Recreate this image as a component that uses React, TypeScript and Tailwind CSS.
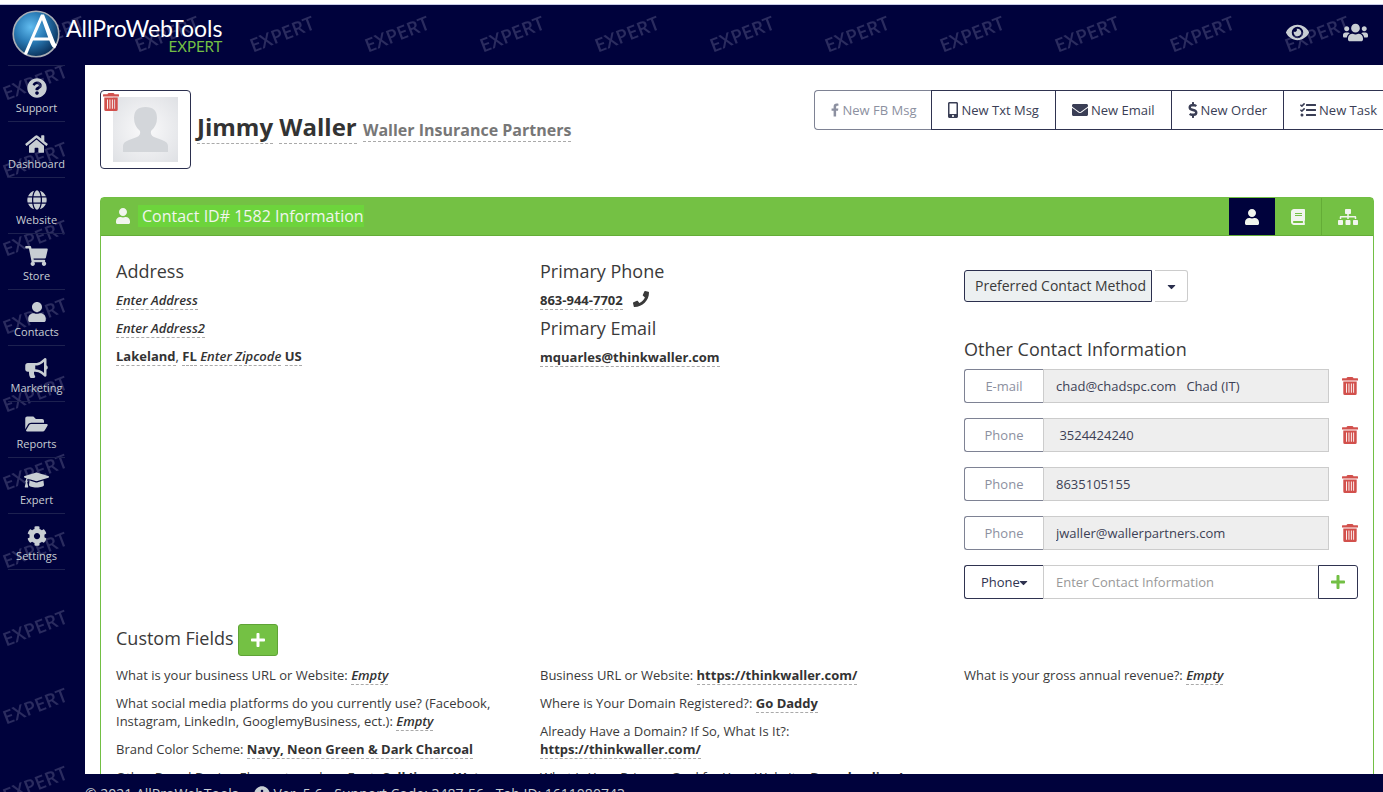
import { useState } from 'react'
import type { ReactNode } from 'react'
import type { IconType } from 'react-icons'
import {
  FaBook,
  FaBullhorn,
  FaCaretDown,
  FaCog,
  FaDollarSign,
  FaEnvelope,
  FaEye,
  FaFacebookF,
  FaFolderOpen,
  FaGlobe,
  FaGraduationCap,
  FaHome,
  FaInfoCircle,
  FaMobileAlt,
  FaPhone,
  FaPlus,
  FaQuestionCircle,
  FaShoppingCart,
  FaSitemap,
  FaTasks,
  FaUser,
  FaUsers,
} from 'react-icons/fa'

const NAV_ITEMS: { label: string; icon: IconType; iconClass: string }[] = [
  { label: 'Support', icon: FaQuestionCircle, iconClass: 'w-5' },
  { label: 'Dashboard', icon: FaHome, iconClass: 'w-[23px]' },
  { label: 'Website', icon: FaGlobe, iconClass: 'w-5' },
  { label: 'Store', icon: FaShoppingCart, iconClass: 'w-[23px]' },
  { label: 'Contacts', icon: FaUser, iconClass: 'w-5' },
  { label: 'Marketing', icon: FaBullhorn, iconClass: 'w-[23px]' },
  { label: 'Reports', icon: FaFolderOpen, iconClass: 'w-[23px]' },
  { label: 'Expert', icon: FaGraduationCap, iconClass: 'w-[25px]' },
  { label: 'Settings', icon: FaCog, iconClass: 'w-5' },
]

const ACTIONS: { label: string; icon: IconType; iconClass: string; disabled?: boolean }[] = [
  { label: 'New FB Msg', icon: FaFacebookF, iconClass: 'w-2', disabled: true },
  { label: 'New Txt Msg', icon: FaMobileAlt, iconClass: 'w-2.5' },
  { label: 'New Email', icon: FaEnvelope, iconClass: 'w-4' },
  { label: 'New Order', icon: FaDollarSign, iconClass: 'w-2.5' },
  { label: 'New Task', icon: FaTasks, iconClass: 'w-4' },
]

const TABS: { label: string; icon: IconType; className: string }[] = [
  { label: 'Contact', icon: FaUser, className: 'w-[46px]' },
  { label: 'Notes', icon: FaBook, className: 'w-[46px]' },
  { label: 'Hierarchy', icon: FaSitemap, className: 'w-[52px] border-l border-[#64ac37]' },
]

const OTHER_CONTACTS = [
  { type: 'E-mail', value: 'chad@chadspc.com\u00a0\u00a0 Chad (IT)' },
  { type: 'Phone', value: '\u00a03524424240' },
  { type: 'Phone', value: '8635105155' },
  { type: 'Phone', value: 'jwaller@wallerpartners.com' },
]

const CUSTOM_FIELDS: { question: string; answer?: string }[][] = [
  [
    { question: 'What is your business URL or Website:' },
    {
      question:
        'What social media platforms do you currently use? (Facebook, Instagram, LinkedIn, GooglemyBusiness, ect.):',
    },
    { question: 'Brand Color Scheme:', answer: 'Navy, Neon Green & Dark Charcoal' },
    { question: 'Other Brand Design Elements such as Font:', answer: 'Call Jimmy Wat' },
  ],
  [
    { question: 'Business URL or Website:', answer: 'https://thinkwaller.com/' },
    { question: 'Where is Your Domain Registered?:', answer: 'Go Daddy' },
    { question: 'Already Have a Domain? If So, What Is It?:', answer: 'https://thinkwaller.com/' },
    { question: 'What Is Your Primary Goal for Your Website:', answer: 'Downloading I' },
  ],
  [{ question: 'What is your gross annual revenue?:' }],
]

// Repeating plan name behind the navy chrome
function Watermark({ id, x, y }: { id: string; x: number; y: number }) {
  return (
    <svg className="pointer-events-none absolute inset-0 h-full w-full" aria-hidden="true">
      <defs>
        <pattern id={id} x={x} y={y} width="115" height="78" patternUnits="userSpaceOnUse">
          <text
            x="57"
            y="46"
            textAnchor="middle"
            fontSize="19"
            fontFamily="'Open Sans', sans-serif"
            fontWeight="600"
            fill="#2b2c5f"
            transform="rotate(-21 57 39)"
          >
            EXPERT
          </text>
        </pattern>
      </defs>
      <rect width="100%" height="100%" fill={`url(#${id})`} />
    </svg>
  )
}

function TrashIcon() {
  return (
    <svg width="16" height="18" viewBox="0 0 16 18" fill="#d2504c" aria-hidden="true">
      <path
        fillRule="evenodd"
        d="M4.500 1.200Q4.800 0 6 0H10Q11.200 0 11.500 1.200H15.500Q16 1.200 16 1.800V3.500H0V1.800Q0 1.200 .5 1.200ZM1.300 4.500H14.700V16.500Q14.700 18 13.200 18H2.800Q1.300 18 1.300 16.500ZM4.100 6.600V15.800H5V6.600ZM6.500 6.600V15.800H7.400V6.600ZM8.900 6.600V15.800H9.800V6.600ZM11.200 6.600V15.800H12.100V6.600Z"
      />
    </svg>
  )
}

function Logo() {
  return (
    <a href="#" className="relative flex items-start gap-1.5 pt-[5px] pl-3">
      <svg width="48" height="48" viewBox="0 0 48 48" aria-hidden="true">
        <defs>
          <radialGradient id="orb" cx="0.38" cy="0.35" r="0.65">
            <stop offset="0" stopColor="#62bdf0" />
            <stop offset="0.5" stopColor="#2b7db8" />
            <stop offset="1" stopColor="#0c3560" />
          </radialGradient>
        </defs>
        <circle cx="24" cy="24" r="22.800" fill="url(#orb)" stroke="#a9adb5" strokeWidth="1.600" />
        <path
          d="M12 43.500 29 4.500H32L43 32.500Q43.500 34 45 34.500L43 38.500Q40 37.500 39 34.500L37.300 30.500H21L15 44.500Q13.500 45.500 12 43.500ZM22.300 27.500H36.200L30 10Z"
          fill="#fff"
        />
      </svg>
      <span className="flex flex-col items-end pt-1">
        <span className="font-['Lato'] text-[23px] leading-[28px] text-white">AllProWebTools</span>
        <span className="-mt-1.5 font-['Lato'] text-[15px] leading-5 text-[#72bf44]">EXPERT</span>
      </span>
    </a>
  )
}

function Editable({ children, empty }: { children: ReactNode; empty?: boolean }) {
  return (
    <a
      href="#"
      className={
        empty
          ? 'border-b border-dashed border-[#aaa] font-semibold text-[#333] italic'
          : 'border-b border-dashed border-[#aaa] font-bold text-[#333]'
      }
    >
      {children}
    </a>
  )
}

function Heading({ children }: { children: ReactNode }) {
  return <h3 className="text-lg leading-5 text-[#3a3a3a]">{children}</h3>
}

function ContactRow({ id, type, value }: { id: string; type: string; value: string }) {
  return (
    <div className="flex items-center">
      <label
        htmlFor={id}
        className="h-[34px] w-[79px] shrink-0 rounded-l-[3px] border border-r-0 border-[#7e8294] text-center leading-8 text-[#8c90a0]"
      >
        {type}
      </label>
      <input
        id={id}
        readOnly
        defaultValue={value}
        className="h-[34px] w-full min-w-0 border border-[#ccc] bg-[#eee] px-3 text-[#3c3f55] outline-none"
      />
      <button type="button" aria-label={`Delete ${type}`} className="ml-[13px] shrink-0">
        <TrashIcon />
      </button>
    </div>
  )
}

export default function App() {
  const [tab, setTab] = useState('Contact')

  return (
    <div className="flex h-screen flex-col overflow-hidden bg-white pt-1 font-['Open_Sans',sans-serif] text-[13px] leading-[18px] text-[#3a3a3a]">
      <header className="relative flex h-[61px] shrink-0 items-start justify-between border-t border-[#c8cbe6] bg-[#00023c]">
        <Watermark id="wm-top" x={-5} y={-10} />
        <Logo />
        <div className="relative flex items-center gap-[34px] pt-[15px] pr-[15px] text-[#c8ced3]">
          <button type="button" aria-label="Preview">
            <FaEye size={23} />
          </button>
          <button type="button" aria-label="Users">
            <FaUsers size={25} />
          </button>
        </div>
      </header>

      <div className="flex min-h-0 flex-1">
        <nav className="relative w-[85px] shrink-0 overflow-hidden bg-[#00023c] pl-2">
          <Watermark id="wm-side" x={-22} y={-22} />
          <ul className="relative w-[57px] border-t border-[#1d2150]">
            {NAV_ITEMS.map(({ label, icon: Icon, iconClass }) => (
              <li key={label} className="border-b border-[#1d2150]">
                <a href="#" className="flex h-[55px] flex-col items-center pt-3 text-[#c8ced3]">
                  <Icon className={`h-5 ${iconClass}`} />
                  <span className="mt-0.5 text-[11px] leading-4">{label}</span>
                </a>
              </li>
            ))}
          </ul>
        </nav>

        <div className="flex min-w-0 flex-1 flex-col">
          <main className="min-h-0 flex-1 overflow-hidden pt-[25px] pr-[9px] pl-[15px]">
            <div className="flex items-start justify-between">
              <div className="flex items-center gap-1.5">
                <div className="relative h-[79px] w-[91px] shrink-0 rounded border border-[#2b2f4e] px-3 py-1.5">
                  <svg width="65" height="65" viewBox="0 0 65 65" role="img" aria-label="Contact photo">
                    <defs>
                      <radialGradient id="photo" r="0.75">
                        <stop offset="0" stopColor="#fafafb" />
                        <stop offset="1" stopColor="#dddfe3" />
                      </radialGradient>
                    </defs>
                    <rect width="65" height="65" fill="url(#photo)" />
                    <path
                      d="M10 55V49Q10 45 16 43L24 40Q28 38 27 34Q21 29 21 21Q21 10 32.500 10Q44 10 44 21Q44 29 38 34Q37 38 41 40L49 43Q55 45 55 49V55Z"
                      fill="#d3d6da"
                    />
                  </svg>
                  <button type="button" aria-label="Delete photo" className="absolute top-0.5 left-0.5">
                    <TrashIcon />
                  </button>
                </div>
                <h1 className="pb-1.5 text-2xl leading-8 font-bold whitespace-nowrap text-[#333]">
                  <a href="#" className="border-b border-dashed border-[#aaa]">Jimmy</a>{' '}
                  <a href="#" className="border-b border-dashed border-[#aaa]">Waller</a>{' '}
                  <a href="#" className="border-b border-dashed border-[#aaa] text-base text-[#777]">
                    Waller Insurance Partners
                  </a>
                </h1>
              </div>

              {/* the toolbar runs past the right edge of the content */}
              <div className="-mr-5 flex shrink-0">
                {ACTIONS.map(({ label, icon: Icon, iconClass, disabled }) => (
                  <button
                    key={label}
                    type="button"
                    disabled={disabled}
                    className="-ml-px flex h-10 items-center gap-[3px] border border-[#2f3350] px-4 text-[#3a3e55] first:ml-0 first:rounded-l first:border-r-0 last:rounded-r disabled:border-[#7e8294] disabled:text-[#8c90a0]"
                  >
                    <Icon className={`h-4 ${iconClass}`} />
                    {label}
                  </button>
                ))}
              </div>
            </div>

            <section className="mt-7 rounded-t border border-[#72bf44]">
              <div className="flex h-[38px] items-stretch justify-between border-b border-[#64ac37] bg-[#74c144] text-[#f1f5ee]">
                <h2 className="flex items-center gap-[7px] pb-0.5 pl-[14px] text-base">
                  <FaUser size={16} />
                  <span className="bg-[#6dd43c] pl-1 leading-[22px]">Contact ID# 1582 Information</span>
                </h2>
                <div className="flex">
                  {TABS.map(({ label, icon: Icon, className }) => (
                    <button
                      key={label}
                      type="button"
                      aria-label={label}
                      onClick={() => setTab(label)}
                      className={`flex items-center justify-center ${className} ${tab === label ? 'bg-[#00023c]' : ''}`}
                    >
                      <Icon className="h-4 w-5" />
                    </button>
                  ))}
                </div>
              </div>

              <div className="grid grid-cols-3 pt-[25px]">
                <div className="flex flex-col gap-2.5 px-[15px]">
                  <Heading>Address</Heading>
                  <p>
                    <Editable empty>Enter Address</Editable>
                  </p>
                  <p>
                    <Editable empty>Enter Address2</Editable>
                  </p>
                  <p>
                    <Editable>Lakeland</Editable>, <Editable>FL</Editable>{' '}
                    <Editable empty>Enter Zipcode</Editable> <Editable>US</Editable>
                  </p>
                </div>

                <div className="flex flex-col gap-2.5 px-[15px]">
                  <Heading>Primary Phone</Heading>
                  <p className="flex h-[17px] items-start gap-2.5">
                    <Editable>863-944-7702</Editable>
                    <FaPhone size={16} />
                  </p>
                  <Heading>Primary Email</Heading>
                  <p>
                    <Editable>mquarles@thinkwaller.com</Editable>
                  </p>
                </div>

                <div className="px-[15px] pt-[9px]">
                  <div className="flex gap-[3px]">
                    <button
                      type="button"
                      className="h-8 rounded-l-[3px] border border-[#2b2f4e] bg-[#ecf0f1] pr-[5px] pl-2.5 text-sm text-[#3a3a3a]"
                    >
                      Preferred Contact Method
                    </button>
                    <button
                      type="button"
                      aria-label="Choose contact method"
                      className="flex h-8 w-[33px] items-center justify-center rounded-r-[3px] border border-l-0 border-[#ccc] text-[#2b2f4e]"
                    >
                      <FaCaretDown size={13} />
                    </button>
                  </div>

                  <div className="mt-[37px] mb-2.5">
                    <Heading>Other Contact Information</Heading>
                  </div>
                  <div className="flex flex-col gap-[15px]">
                    {OTHER_CONTACTS.map((contact, i) => (
                      <ContactRow key={contact.value} id={`contact-${i}`} type={contact.type} value={contact.value} />
                    ))}
                    <div className="flex">
                      <div className="relative w-[79px] shrink-0">
                        <select
                          aria-label="Contact type"
                          className="h-[34px] w-full appearance-none rounded-l-[3px] border border-r-0 border-[#2f3350] bg-white pl-4 text-[#2f3350]"
                        >
                          <option>Phone</option>
                          <option>E-mail</option>
                        </select>
                        <FaCaretDown size={13} className="pointer-events-none absolute top-[11px] right-[13px] text-[#2f3350]" />
                      </div>
                      <input
                        aria-label="Contact information"
                        placeholder="Enter Contact Information"
                        className="h-[34px] w-full min-w-0 border border-r-0 border-[#ccc] px-3 placeholder:text-[#999]"
                      />
                      <button
                        type="button"
                        aria-label="Add contact information"
                        className="flex h-[34px] w-10 shrink-0 items-center justify-center rounded-r-[3px] border border-[#2f3350] text-[#72bf44]"
                      >
                        <FaPlus size={16} />
                      </button>
                    </div>
                  </div>
                </div>
              </div>

              <div className="mt-[25px] mb-2.5 flex items-center gap-1 px-[15px]">
                <div className="pb-1">
                  <Heading>Custom Fields</Heading>
                </div>
                <button
                  type="button"
                  aria-label="Add custom field"
                  className="flex h-8 w-10 items-center justify-center rounded-[3px] border border-[#5fa336] bg-[#74c144] text-white"
                >
                  <FaPlus size={16} />
                </button>
              </div>
              <div className="grid grid-cols-3">
                {CUSTOM_FIELDS.map((fields, i) => (
                  <div key={i} className="flex flex-col gap-2.5 px-[15px]">
                    {fields.map(({ question, answer }) => (
                      <p key={question}>
                        {question} <Editable empty={!answer}>{answer ?? 'Empty'}</Editable>
                      </p>
                    ))}
                  </div>
                ))}
              </div>
            </section>
          </main>

          <footer className="h-[18px] shrink-0 overflow-hidden bg-[#00023c] pt-2.5 text-sm text-[#c8ced3]">
            <p className="flex items-center leading-5 whitespace-pre">
              © 2021 AllProWebTools -{'  '}
              <FaInfoCircle size={16} /> Ver. 5.6 - Support Code: 3487-56 - Tab ID: 1611080743
            </p>
          </footer>
        </div>
      </div>
    </div>
  )
}
